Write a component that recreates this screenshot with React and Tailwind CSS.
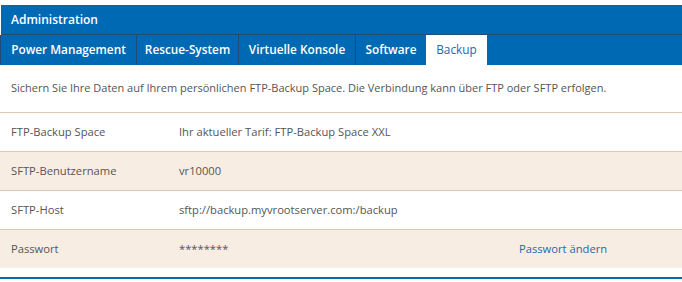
const tabs = [
  { name: "Power Management", cls: "w-[136px] border-r border-[#1f4d78] text-white font-semibold" },
  { name: "Rescue-System", cls: "w-[102px] border-r border-[#1f4d78] text-white font-semibold" },
  { name: "Virtuelle Konsole", cls: "w-[117px] border-r border-[#1f4d78] text-white font-semibold" },
  { name: "Software", cls: "w-[70px] text-white font-semibold" },
  { name: "Backup", cls: "w-[61px] bg-white text-[#2566ad] font-medium" },
];

const rows = [
  { label: "FTP-Backup Space", value: "Ihr aktueller Tarif: FTP-Backup Space XXL" },
  { label: "SFTP-Benutzername", value: "vr10000" },
  { label: "SFTP-Host", value: "sftp://backup.myvrootserver.com:/backup" },
  { label: "Passwort", value: "********", link: "Passwort ändern" },
];

export default function App() {
  return (
    <div className="w-[682px] h-[282px] bg-white pt-[5px] font-['Open_Sans',sans-serif] text-[#555]">
      <div className="ml-px w-[681px] h-[30px] bg-[#0069b4] border-b border-[#1f4d78] text-white text-[12px] font-semibold pl-[10px] flex items-center">
        Administration
      </div>
      <div className="flex h-[30px] bg-[#0069b4] border-l border-[#1f4d78]">
        {tabs.map((t) => (
          <div key={t.name} className={"flex items-center justify-center text-[11.8px] " + t.cls}>
            {t.name}
          </div>
        ))}
      </div>
      <div className="h-[47px] flex items-center pl-[11px] text-[11px]">
        Sichern Sie Ihre Daten auf Ihrem persönlichen FTP-Backup Space. Die Verbindung kann über FTP oder SFTP erfolgen.
      </div>
      <div className="text-[11.2px]">
        {rows.map((r, i) => (
          <div
            key={r.label}
            className={
              i % 2 === 1
                ? "h-[39px] flex items-center border-t border-[#dccab6] bg-[#f8ede3]"
                : "h-[39px] flex items-center border-t border-[#dccab6] bg-white"
            }
          >
            <div className="w-[179px] pl-[11px]">{r.label}</div>
            <div className="w-[340px]">{r.value}</div>
            {r.link && <div className="text-[#2566ad]">{r.link}</div>}
          </div>
        ))}
      </div>
      <div className="mt-[9px] h-[2px] bg-[#0069b4]" />
    </div>
  );
}
